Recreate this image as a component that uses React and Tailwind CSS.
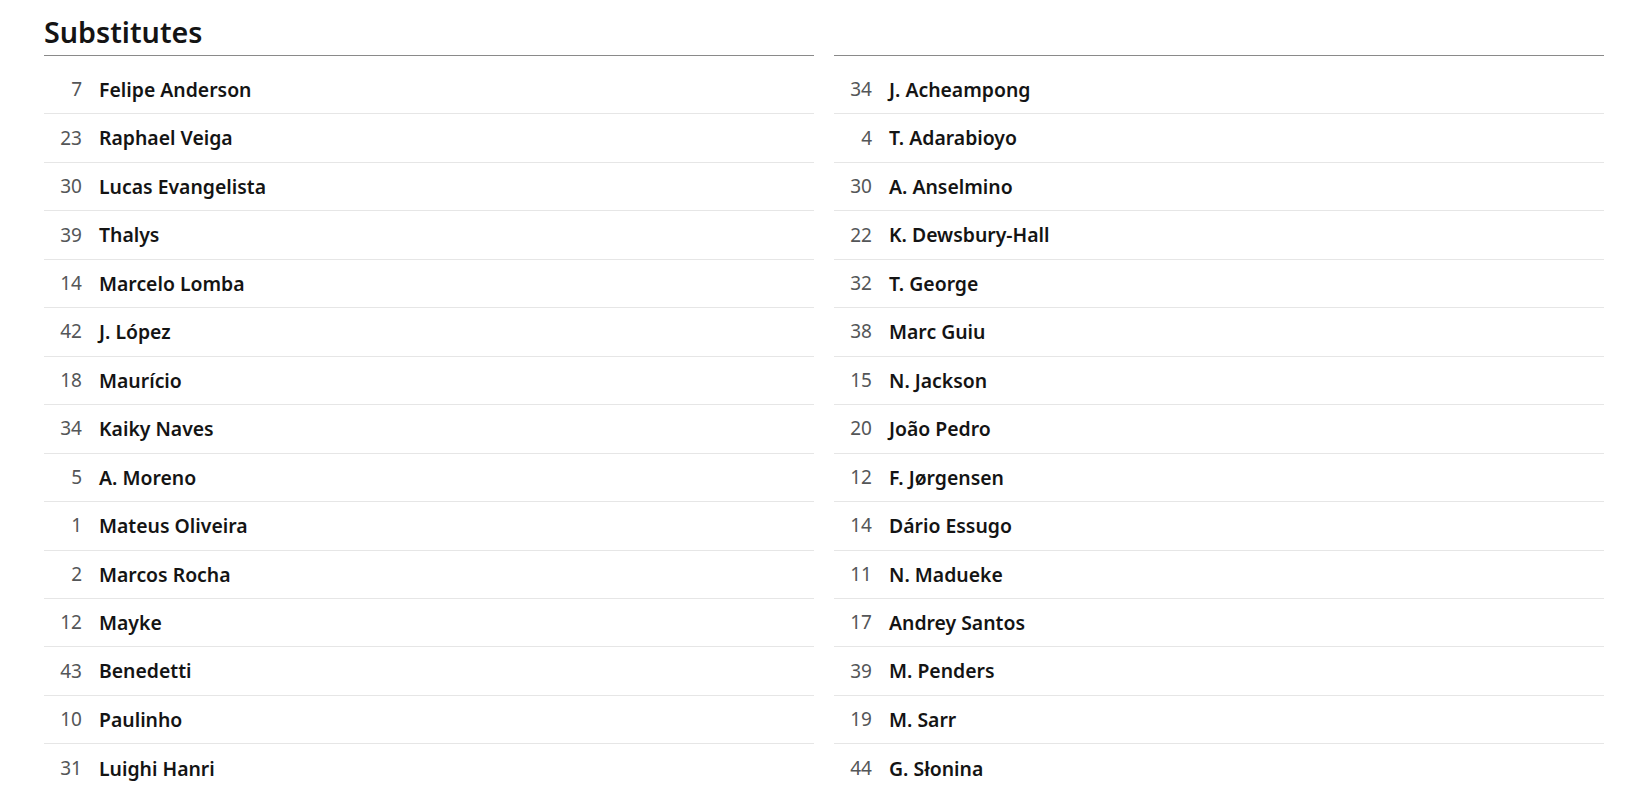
const home = [
  [7, "Felipe Anderson"],
  [23, "Raphael Veiga"],
  [30, "Lucas Evangelista"],
  [39, "Thalys"],
  [14, "Marcelo Lomba"],
  [42, "J. López"],
  [18, "Maurício"],
  [34, "Kaiky Naves"],
  [5, "A. Moreno"],
  [1, "Mateus Oliveira"],
  [2, "Marcos Rocha"],
  [12, "Mayke"],
  [43, "Benedetti"],
  [10, "Paulinho"],
  [31, "Luighi Hanri"],
];

const away = [
  [34, "J. Acheampong"],
  [4, "T. Adarabioyo"],
  [30, "A. Anselmino"],
  [22, "K. Dewsbury-Hall"],
  [32, "T. George"],
  [38, "Marc Guiu"],
  [15, "N. Jackson"],
  [20, "João Pedro"],
  [12, "F. Jørgensen"],
  [14, "Dário Essugo"],
  [11, "N. Madueke"],
  [17, "Andrey Santos"],
  [39, "M. Penders"],
  [19, "M. Sarr"],
  [44, "G. Słonina"],
];

const PlayerRow = ({ number, name }) => (
  <li className="flex items-center h-[48.46px] border-b border-[#e6e6e6] last:border-b-0">
    <span className="w-[38px] text-right text-[19px] leading-none text-[#545658]">{number}</span>
    <span className="ml-[17px] text-[19.4px] leading-none font-semibold text-[#141414]">{name}</span>
  </li>
);

const SubsColumn = ({ title, players }) => (
  <div>
    <div className="h-[56px] flex items-end border-b border-[#8a8a8a] pb-[8px]">
      {title && (
        <h2 className="text-[28.7px] leading-none font-semibold text-[#141414]">{title}</h2>
      )}
    </div>
    <ul className="pt-[10px]">
      {players.map(([num, name]) => (
        <PlayerRow key={name} number={num} name={name} />
      ))}
    </ul>
  </div>
);

export default function App() {
  return (
    <div
      className="min-h-[810px] bg-white pl-[44px] pr-[47px] [font-variant-ligatures:none]"
      style={{ fontFamily: "'Noto Sans', 'Open Sans', sans-serif" }}
    >
      <div className="grid grid-cols-2 gap-x-[20px]">
        <SubsColumn title="Substitutes" players={home} />
        <SubsColumn players={away} />
      </div>
    </div>
  );
}
